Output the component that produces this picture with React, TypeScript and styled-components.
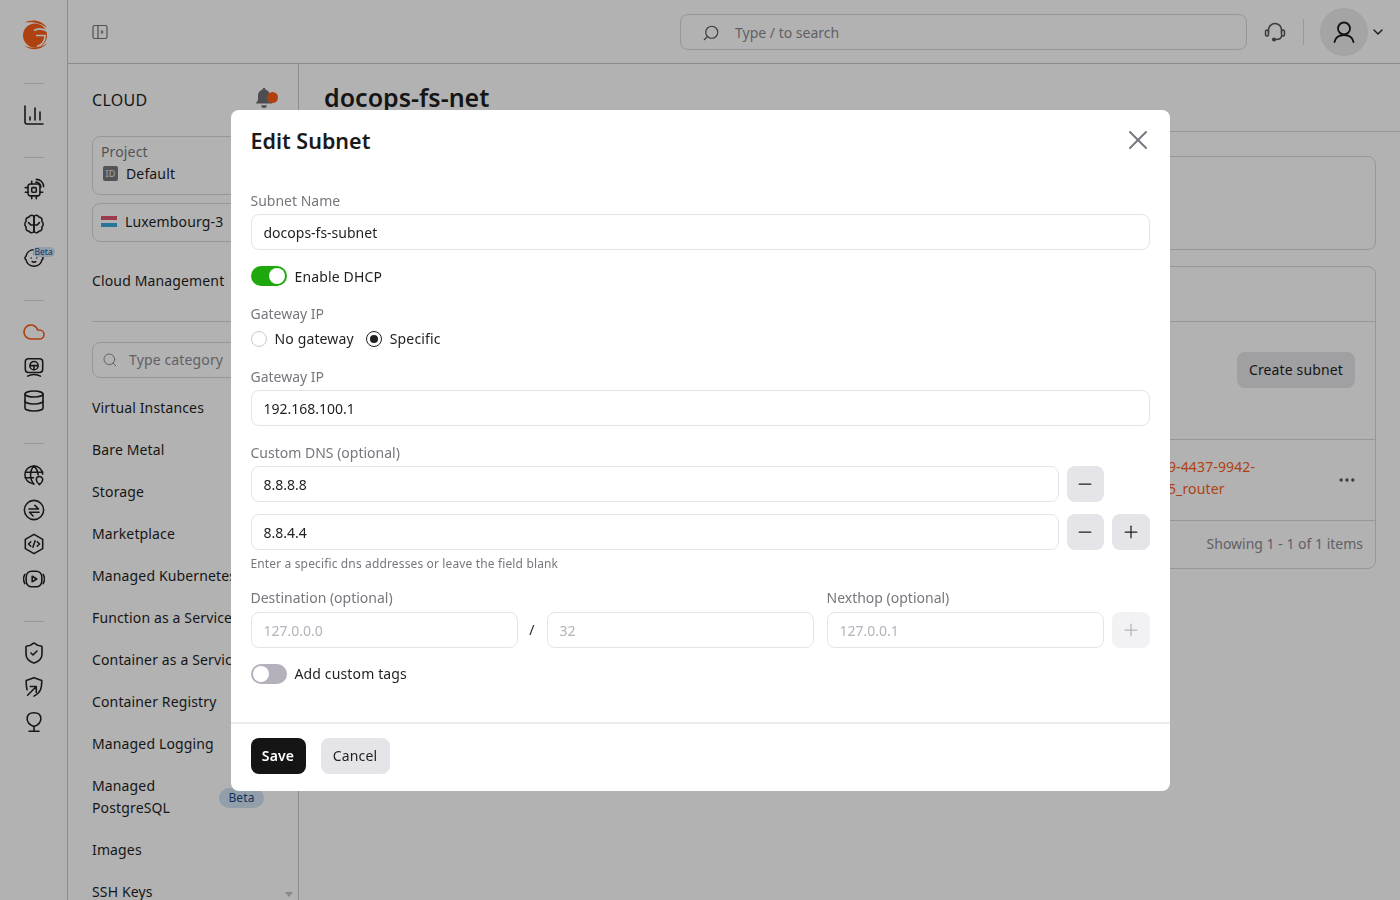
import styled, {createGlobalStyle} from 'styled-components'
import {ReactNode} from 'react'
import {Baby, ChartColumn, ChevronDown, Cloud, Database, Ellipsis, Minus, Plus, Search, ShieldCheck, X} from 'lucide-react'

const GlobalStyle = createGlobalStyle`
    html, body {
        margin: 0;
        height: 100%;
        overflow: hidden;
    }
    body {
        font-family: "Noto Sans", "Open Sans", sans-serif;
        font-size: 14px;
        line-height: 22px;
        letter-spacing: 0.14px;
        color: #1f1f1f;
        background: #fff;
    }
    * {
        box-sizing: border-box;
    }
    button {
        letter-spacing: inherit;
    }
`;

const Page = styled.div`
    display: flex;
    width: 1400px;
    height: 900px;
    overflow: hidden;
`;

const Rail = styled.nav`
    flex: 0 0 68px;
    display: flex;
    flex-direction: column;
    align-items: center;
    padding-top: 18px;
    border-right: 1px solid #c9c9c9;
`;

const RailGroup = styled.div`
    display: flex;
    flex-direction: column;
    align-items: center;
    gap: 12.5px;
`;

const LogoSlot = styled.span`
    display: flex;
    align-items: center;
    justify-content: center;
    width: 34px;
    height: 34px;
    margin-left: 3px;
`;

const RailIcon = styled.span<{ $active?: boolean }>`
    position: relative;
    display: flex;
    align-items: center;
    justify-content: center;
    width: 22px;
    height: 22px;
    color: ${props => props.$active ? '#fb5e18' : '#222'};

    svg {
        flex: none;
    }
`;

const RailDivider = styled.hr`
    width: 20px;
    height: 1px;
    margin: 31px 0 20px;
    border: 0;
    background: #d9d9d9;
`;

const RailBeta = styled.span`
    position: absolute;
    top: 0;
    left: 10px;
    padding: 0 2px;
    border-radius: 5px;
    font-size: 8.5px;
    line-height: 10px;
    letter-spacing: 0;
    color: #1c4a86;
    background: #d3e3f5;
`;

const Column = styled.div`
    flex: 1;
    display: flex;
    flex-direction: column;
    min-width: 0;
`;

const Topbar = styled.header`
    flex: 0 0 64px;
    display: flex;
    align-items: center;
    padding: 0 14px 0 24px;
    border-bottom: 1px solid #c9c9c9;
`;

const SearchBox = styled.div`
    display: flex;
    align-items: center;
    gap: 15px;
    width: 567px;
    height: 36px;
    margin-left: auto;
    padding: 2px 0 0 21px;
    border: 1px solid #d9d9dd;
    border-radius: 8px;
    color: #8b8b92;
    font-size: 14px;
    letter-spacing: 0;
`;

const HeadsetWrap = styled.span`
    display: flex;
    margin-left: 17px;
    color: #55555c;
`;

const TopDivider = styled.span`
    width: 1px;
    height: 26px;
    margin: 0 16px 0 17px;
    background: #dcdcdc;
`;

const Avatar = styled.span`
    display: flex;
    align-items: center;
    justify-content: center;
    width: 48px;
    height: 48px;
    border-radius: 50%;
    background: #ebebed;
`;

const AvatarCaret = styled(ChevronDown)`
    margin-left: 2px;
    color: #222;
`;

const Body = styled.div`
    flex: 1;
    display: flex;
    min-height: 0;
`;

const SidePanel = styled.aside`
    flex: 0 0 231px;
    position: relative;
    padding: 24px 24px 0;
    border-right: 1px solid #c9c9c9;
    overflow: hidden;
`;

const PanelHead = styled.div`
    display: flex;
    align-items: center;
    justify-content: space-between;
    height: 24px;
    margin-bottom: 24px;
    font-size: 16px;
    letter-spacing: 0.3px;
`;

const BellWrap = styled.span`
    position: relative;
    display: flex;
    margin: -5px 0 0 0;
    color: #6f6f74;
`;

const BellDot = styled.span`
    position: absolute;
    top: 5px;
    right: -4px;
    width: 11px;
    height: 11px;
    border-radius: 50%;
    background: #fb5e18;
`;

const SelectBox = styled.div<{ $height: number, $lift: number }>`
    display: flex;
    flex-direction: column;
    justify-content: center;
    width: 182px;
    height: ${props => props.$height}px;
    margin-bottom: 8px;
    padding: 0 8px ${props => props.$lift}px;
    border: 1px solid #d9d9dd;
    border-radius: 8px;
`;

const SelectLabel = styled.span`
    color: #77777e;
    font-size: 14px;
    line-height: 22px;
`;

const SelectRow = styled.span`
    display: flex;
    align-items: center;
    gap: 8px;
`;

const IdTag = styled.span`
    display: flex;
    align-items: center;
    justify-content: center;
    width: 15px;
    height: 15px;
    margin-left: 2px;
    border-radius: 2px;
    font-size: 9px;
    line-height: 15px;
    color: #eee;
    background: #77777e;
`;

const Flag = styled.span`
    width: 16px;
    height: 11px;
    background: linear-gradient(#e0556a 0 4px, transparent 4px 7px, #38a8dc 7px);
`;

const PanelCaption = styled.div`
    margin: 28px 0 29px;
    white-space: nowrap;
`;

const PanelRule = styled.hr`
    margin: 0 0 20px;
    border: 0;
    height: 1px;
    background: #d9d9dd;
`;

const CategorySearch = styled.div`
    display: flex;
    align-items: center;
    gap: 11px;
    width: 182px;
    height: 36px;
    margin-bottom: 19px;
    padding-left: 9px;
    border: 1px solid #d9d9dd;
    border-radius: 8px;
    color: #8b8b92;
    white-space: nowrap;
`;

const NavList = styled.ul`
    display: flex;
    flex-direction: column;
    gap: 20px;
    margin: 0;
    padding: 0;
    list-style: none;
`;

const NavItem = styled.li`
    position: relative;
    white-space: nowrap;
`;

const NavBeta = styled.span`
    position: absolute;
    top: 13px;
    left: 127px;
    width: 45px;
    height: 20px;
    border-radius: 10px;
    font-size: 12px;
    line-height: 20px;
    text-align: center;
    color: #1c4a86;
    background: #d3e3f5;
`;

const ScrollArrow = styled.span`
    position: absolute;
    right: 5px;
    bottom: 3px;
    width: 0;
    height: 0;
    border-left: 4px solid transparent;
    border-right: 4px solid transparent;
    border-top: 5px solid #c4c4c4;
`;

const Main = styled.main`
    flex: 1;
    min-width: 0;
`;

const TitleBar = styled.div`
    height: 68px;
    padding: 13px 25px 0;
    border-bottom: 1px solid #d9d9dd;
    font-size: 25px;
    font-weight: 600;
    line-height: 40px;
    letter-spacing: 0;
`;

const Content = styled.div`
    display: flex;
    flex-direction: column;
    gap: 16px;
    padding: 24px 24px 0;
`;

const Card = styled.section`
    border: 1px solid #d9d9dd;
    border-radius: 8px;
`;

const InfoCard = styled(Card)`
    height: 94px;
`;

const TableCard = styled(Card)`
    height: 303px;
`;

const CardTabs = styled.div`
    height: 55px;
    border-bottom: 1px solid #d9d9dd;
`;

const CardToolbar = styled.div`
    display: flex;
    justify-content: flex-end;
    height: 118px;
    padding: 30px 20px 0 0;
    border-bottom: 1px solid #d9d9dd;
`;

const CreateButton = styled.button`
    width: 118px;
    height: 36px;
    border: 0;
    border-radius: 8px;
    font: inherit;
    color: #1f1f1f;
    background: #e5e4e9;
`;

const TableRow = styled.div`
    display: flex;
    align-items: center;
    justify-content: space-between;
    height: 81px;
    padding-right: 18px;
    border-bottom: 1px solid #d9d9dd;
`;

const RouterLink = styled.span`
    margin: 0 0 4px 795px;
    color: #fb5e18;
    white-space: nowrap;
`;

const RowMenu = styled(Ellipsis)`
    color: #55555c;
`;

const TableFooter = styled.div`
    padding: 12px 12px 0 0;
    color: #8b8b92;
    letter-spacing: 0;
    text-align: right;
`;

const Overlay = styled.div`
    position: fixed;
    inset: 0;
    display: flex;
    align-items: center;
    justify-content: center;
    background: rgba(0, 0, 0, 0.3);
`;

const Modal = styled.div`
    display: flex;
    flex-direction: column;
    width: 939px;
    height: 681px;
    border-radius: 8px;
    background: #fff;
`;

const ModalHead = styled.div`
    display: flex;
    align-items: center;
    justify-content: space-between;
    height: 60px;
    margin-bottom: 21px;
    padding: 16px 20px 14px;
`;

const ModalTitle = styled.h2`
    margin: 0;
    font-size: 21.5px;
    font-weight: 600;
    line-height: 30px;
    letter-spacing: 0;
    color: #1a1a1a;
`;

const CloseIcon = styled(X)`
    flex: none;
    margin: -2px -4px 0 0;
    color: #77777e;
`;

const Form = styled.div`
    flex: 1;
    display: flex;
    flex-direction: column;
    gap: 16px;
    padding: 0 20px;
`;

const Field = styled.div`
    display: flex;
    flex-direction: column;
    gap: 3px;
`;

const DnsField = styled(Field)`
    margin-top: 1px;
`;

const RouteField = styled(Field)<{ $width?: string }>`
    flex: ${props => props.$width ? `0 0 ${props.$width}` : '1'};
    gap: 4px;
    min-width: 0;
`;

const NexthopField = styled(RouteField)`
    margin-left: 5px;
`;

const Label = styled.label`
    font-size: 14px;
    line-height: 20px;
    letter-spacing: 0;
    color: #77777e;
`;

const Input = styled.input`
    width: 100%;
    min-width: 0;
    height: 36px;
    padding: 2px 12px 0;
    border: 1px solid #e4e4e8;
    border-radius: 8px;
    outline: none;
    font: inherit;
    letter-spacing: 0;
    color: #1f1f1f;
    background: #fff;

    &::placeholder {
        color: #b3b3bb;
        opacity: 1;
    }
`;

const Toggle = styled.span<{ $on?: boolean }>`
    display: inline-flex;
    justify-content: ${props => props.$on ? 'flex-end' : 'flex-start'};
    width: 36px;
    height: 20px;
    padding: 2px;
    border-radius: 10px;
    background: ${props => props.$on ? '#1fa80e' : '#b6afbc'};

    &::after {
        content: '';
        width: 16px;
        height: 16px;
        border-radius: 50%;
        background: #fff;
    }
`;

const SwitchRow = styled.div`
    display: flex;
    align-items: center;
    gap: 8px;
    height: 20px;
`;

const DhcpText = styled.span`
    padding-top: 2px;
`;

const RadioField = styled.div`
    display: flex;
    flex-direction: column;
    gap: 5px;
    margin: 2px 0;
`;

const RadioRow = styled.div`
    display: flex;
    align-items: center;
    gap: 12px;
    height: 20px;
`;

const RadioOption = styled.span`
    display: flex;
    align-items: center;
    gap: 8px;
`;

const RadioMark = styled.span<{ $checked?: boolean }>`
    display: flex;
    align-items: center;
    justify-content: center;
    width: 16px;
    height: 16px;
    border: 1px solid ${props => props.$checked ? '#1f1f1f' : '#c9c9cf'};
    border-radius: 50%;

    &::after {
        content: '';
        display: ${props => props.$checked ? 'block' : 'none'};
        width: 8px;
        height: 8px;
        border-radius: 50%;
        background: #1f1f1f;
    }
`;

const DnsStack = styled.div`
    display: flex;
    flex-direction: column;
    gap: 12px;
`;

const InputRow = styled.div`
    display: flex;
    gap: 8px;
    height: 36px;
`;

const DnsInput = styled(Input)`
    flex: 0 0 808px;
    width: 808px;
`;

const IconButton = styled.button<{ $disabled?: boolean }>`
    display: flex;
    align-items: center;
    justify-content: center;
    flex: 0 0 38px;
    height: 36px;
    padding: 0;
    border: 0;
    border-radius: 8px;
    color: ${props => props.$disabled ? '#b3b3bb' : '#1f1f1f'};
    background: ${props => props.$disabled ? '#f2f2f4' : '#e5e4e9'};
`;

const DnsButton = styled(IconButton)`
    flex-basis: 37px;
`;

const Helper = styled.div`
    margin-top: -10px;
    font-size: 12px;
    line-height: 16px;
    color: #77777e;
`;

const RouteRow = styled.div`
    display: flex;
    align-items: flex-end;
    gap: 8px;
`;

const Slash = styled.span`
    flex: 0 0 13px;
    height: 36px;
    line-height: 36px;
    text-align: center;
`;

const ModalFooter = styled.div`
    display: flex;
    gap: 15px;
    height: 69px;
    padding: 14px 20px 17px;
    border-top: 2px solid #ececf0;
`;

const SaveButton = styled.button`
    width: 55px;
    height: 36px;
    border: 0;
    border-radius: 8px;
    font: inherit;
    font-weight: 600;
    color: #fff;
    background: #141414;
`;

const CancelButton = styled.button`
    width: 69px;
    height: 36px;
    border: 0;
    border-radius: 8px;
    font: inherit;
    color: #1f1f1f;
    background: #e5e4e9;
`;

function Line({children, size = 22}: { children: ReactNode, size?: number }) {
    return (
        <svg width={size} height={size} viewBox="0 0 24 24" fill="none" stroke="currentColor" strokeWidth={1.7}
             strokeLinecap="round" strokeLinejoin="round">
            {children}
        </svg>
    )
}

const GcoreLogo = () => (
    <svg width="28" height="32" viewBox="0 0 28 32">
        <circle cx="14" cy="16.500" r="12" fill="#fb5e18"/>
        <path d="M13 11.500C17 9 22 9.500 27 12.500" fill="none" stroke="#fff" strokeWidth="1.600"/>
        <path d="M15 16.500h9C24 22 21 26 16 27.500" fill="none" stroke="#fff" strokeWidth="1.600"/>
        <path fill="#fb5e18" d="M4 3.500C11 0 21 1 26 9 21 4.500 12 2.500 4 3.500Z"/>
        <path fill="#fb5e18" d="M3 26.500C9 31.500 20 32 26 24 20 29 10 30 3 26.500Z"/>
    </svg>
)

const ChipSignal = () => (
    <Line>
        <rect x="5.500" y="6.500" width="13" height="13" rx="2.500"/>
        <rect x="9.500" y="10.500" width="5" height="5" rx="1"/>
        <path d="M2.500 10.500h3M2.500 15.500h3M18.500 15.500h3M9.500 19.500v3M14.500 19.500v3M9.500 3.500v3"/>
        <path d="M14 4.500c3 0 5.500 2.500 5.500 5.500M14.500 1.500c4.500 0 8 3.500 8 8"/>
    </Line>
)

const BrainLobes = () => (
    <Line>
        <path d="M12 4c-1-2-4.500-2-5.500.5C4 4.500 2.500 7 3.500 9 1.500 10.500 1.500 14 3.500 15.500 2.500 18 4.500 20 6.500 19.800 7.500 22 11 22 12 20Z"/>
        <path d="M12 4c1-2 4.500-2 5.500.5C20 4.500 21.500 7 20.500 9c2 1.500 2 5 0 6.500 1 2.500-1 4.500-3 4.300C16.500 22 13 22 12 20Z"/>
        <path d="M12 13H8.500L6 10.500M12 13h3.500L18 10.500"/>
    </Line>
)

const MonitorWheel = () => (
    <Line>
        <rect x="2.500" y="3" width="19" height="15" rx="3.500"/>
        <circle cx="12" cy="10.500" r="4.500"/>
        <path d="M8 10.500h8M12 10.500v4.500M5 22c4-2.500 10-2.500 14 0"/>
    </Line>
)

const GlobePin = () => (
    <Line>
        <path d="M21.500 11A9.700 9.700 0 1 0 11 21.500"/>
        <path d="M2.500 9h19M2.500 15h9M12 2c-5 5.500-5 14.500 0 20M12 2c2.800 3 4.300 6.500 4.600 10"/>
        <path d="M18 22.500s-3.500-2.800-3.500-5.300a3.500 3.500 0 0 1 7 0c0 2.500-3.500 5.300-3.500 5.300Z"/>
    </Line>
)

const CircleSwap = () => (
    <Line>
        <circle cx="12" cy="12" r="10.500"/>
        <path d="M6.500 11H17l-4-4M17.500 14.500H7l4 4"/>
    </Line>
)

const HexCode = () => (
    <Line>
        <path d="M12 1.500l9.500 5.500v10L12 22.500 2.500 17V7Z"/>
        <path d="M8.500 9.500 6 12l2.500 2.500M15.500 9.500 18 12l-2.500 2.500M13.200 8.500l-2.400 7"/>
    </Line>
)

const PlayBox = () => (
    <Line>
        <rect x="3.500" y="3.500" width="17" height="17" rx="6"/>
        <path d="M2 7C.3 10 .3 14 2 17M22 7c1.700 3 1.700 7 0 10"/>
        <path d="M10 9l5 3-5 3Z"/>
    </Line>
)

const ShieldArrow = () => (
    <Line>
        <path d="M4.500 15C3.500 12.500 3.500 9 3.500 5L12 2l8.500 3c0 8-1 13-8.500 17"/>
        <path d="M5 21l9-9M8 11.500h6.500V18"/>
    </Line>
)

const PinBulb = () => (
    <Line>
        <path d="M12 2c4.500 0 7.500 2.500 7.500 6.500 0 4-3.500 7-7.500 8.500-4-1.500-7.500-4.500-7.500-8.500C4.500 4.500 7.500 2 12 2Z"/>
        <path d="M12 17v5M6.500 22h11"/>
    </Line>
)

const Bell = () => (
    <svg width="20" height="22" viewBox="0 0 18 20" fill="currentColor">
        <path d="M9 1c.8 0 1.400.6 1.500 1.400C13 3 14.500 5.200 14.500 8v4l2 3H1.500l2-3V8c0-2.800 1.500-5 4-5.600C7.600 1.600 8.200 1 9 1ZM6.500 16.500h5a2.500 2.500 0 0 1-5 0Z"/>
    </svg>
)

const PanelToggle = () => (
    <svg width="16" height="16" viewBox="0 0 16 16" fill="none" stroke="#77777e" strokeWidth="1.200">
        <rect x="1" y="1.500" width="14" height="13" rx="1.500"/>
        <path d="M6 1.500v13M9 6.500l1.800 1.500L9 9.500"/>
    </svg>
)

const Headset = () => (
    <svg width="22" height="22" viewBox="0 0 22 22" fill="none" stroke="currentColor" strokeWidth="1.500"
         strokeLinecap="round">
        <path d="M4.500 11V9a6.500 6.500 0 0 1 13 0v2M17.500 15c0 2.500-2 3.500-6 3.500"/>
        <rect x="1.500" y="9" width="3" height="6" rx="1.500"/>
        <rect x="17.500" y="9" width="3" height="6" rx="1.500"/>
        <circle cx="10" cy="18.500" r="1.300" fill="currentColor"/>
    </svg>
)

const User = () => (
    <svg width="24" height="24" viewBox="0 0 24 24" fill="none" stroke="#1a1a1a" strokeWidth="1.800"
         strokeLinecap="round">
        <circle cx="12" cy="8.500" r="6"/>
        <path d="M2.500 22c1-4.500 4-7 9.500-7s8.500 2.500 9.500 7"/>
    </svg>
)

const SearchFlipped = styled(Search)`
    transform: scaleX(-1);
    color: #55555c;
`;

const navItems = [
    'Virtual Instances', 'Bare Metal', 'Storage', 'Marketplace', 'Managed Kubernetes', 'Function as a Service',
    'Container as a Service', 'Container Registry', 'Managed Logging',
]

export default function App() {
    return (
        <>
            <GlobalStyle/>
            <Page>
                <Rail>
                    <LogoSlot><GcoreLogo/></LogoSlot>
                    <RailDivider/>
                    <RailIcon><ChartColumn size={24} strokeWidth={1.6}/></RailIcon>
                    <RailDivider/>
                    <RailGroup>
                        <RailIcon><ChipSignal/></RailIcon>
                        <RailIcon><BrainLobes/></RailIcon>
                        <RailIcon><Baby size={22} strokeWidth={1.7}/><RailBeta>Beta</RailBeta></RailIcon>
                    </RailGroup>
                    <RailDivider/>
                    <RailGroup>
                        <RailIcon $active><Cloud size={24} strokeWidth={1.6}/></RailIcon>
                        <RailIcon><MonitorWheel/></RailIcon>
                        <RailIcon><Database size={24} strokeWidth={1.6}/></RailIcon>
                    </RailGroup>
                    <RailDivider/>
                    <RailGroup>
                        <RailIcon><GlobePin/></RailIcon>
                        <RailIcon><CircleSwap/></RailIcon>
                        <RailIcon><HexCode/></RailIcon>
                        <RailIcon><PlayBox/></RailIcon>
                    </RailGroup>
                    <RailDivider/>
                    <RailGroup>
                        <RailIcon><ShieldCheck size={24} strokeWidth={1.6}/></RailIcon>
                        <RailIcon><ShieldArrow/></RailIcon>
                        <RailIcon><PinBulb/></RailIcon>
                    </RailGroup>
                </Rail>
                <Column>
                    <Topbar>
                        <PanelToggle/>
                        <SearchBox>
                            <SearchFlipped size={18} strokeWidth={1.5}/>
                            Type / to search
                        </SearchBox>
                        <HeadsetWrap><Headset/></HeadsetWrap>
                        <TopDivider/>
                        <Avatar><User/></Avatar>
                        <AvatarCaret size={16}/>
                    </Topbar>
                    <Body>
                        <SidePanel>
                            <PanelHead>
                                CLOUD
                                <BellWrap><Bell/><BellDot/></BellWrap>
                            </PanelHead>
                            <SelectBox $height={59} $lift={6}>
                                <SelectLabel>Project</SelectLabel>
                                <SelectRow><IdTag>ID</IdTag>Default</SelectRow>
                            </SelectBox>
                            <SelectBox $height={39} $lift={2}>
                                <SelectRow><Flag/>Luxembourg-3</SelectRow>
                            </SelectBox>
                            <PanelCaption>Cloud Management</PanelCaption>
                            <PanelRule/>
                            <CategorySearch>
                                <Search size={16} strokeWidth={1.5}/>
                                Type category
                            </CategorySearch>
                            <NavList>
                                {navItems.map(item => <NavItem key={item}>{item}</NavItem>)}
                                <NavItem>Managed<br/>PostgreSQL<NavBeta>Beta</NavBeta></NavItem>
                                <NavItem>Images</NavItem>
                                <NavItem>SSH Keys</NavItem>
                            </NavList>
                            <ScrollArrow/>
                        </SidePanel>
                        <Main>
                            <TitleBar>docops-fs-net</TitleBar>
                            <Content>
                                <InfoCard/>
                                <TableCard>
                                    <CardTabs/>
                                    <CardToolbar>
                                        <CreateButton>Create subnet</CreateButton>
                                    </CardToolbar>
                                    <TableRow>
                                        <RouterLink>
                                            7104019-4437-9942-<br/>
                                            7029105_router
                                        </RouterLink>
                                        <RowMenu size={20}/>
                                    </TableRow>
                                    <TableFooter>Showing 1 - 1 of 1 items</TableFooter>
                                </TableCard>
                            </Content>
                        </Main>
                    </Body>
                </Column>
            </Page>
            <Overlay>
                <Modal>
                    <ModalHead>
                        <ModalTitle>Edit Subnet</ModalTitle>
                        <CloseIcon size={32} strokeWidth={1.5}/>
                    </ModalHead>
                    <Form>
                        <Field>
                            <Label>Subnet Name</Label>
                            <Input readOnly value="docops-fs-subnet"/>
                        </Field>
                        <SwitchRow><Toggle $on/><DhcpText>Enable DHCP</DhcpText></SwitchRow>
                        <RadioField>
                            <Label>Gateway IP</Label>
                            <RadioRow>
                                <RadioOption><RadioMark/>No gateway</RadioOption>
                                <RadioOption><RadioMark $checked/>Specific</RadioOption>
                            </RadioRow>
                        </RadioField>
                        <Field>
                            <Label>Gateway IP</Label>
                            <Input readOnly value="192.168.100.1"/>
                        </Field>
                        <DnsField>
                            <Label>Custom DNS (optional)</Label>
                            <DnsStack>
                                <InputRow>
                                    <DnsInput readOnly value="8.8.8.8"/>
                                    <DnsButton><Minus size={20} strokeWidth={1.5}/></DnsButton>
                                </InputRow>
                                <InputRow>
                                    <DnsInput readOnly value="8.8.4.4"/>
                                    <DnsButton><Minus size={20} strokeWidth={1.5}/></DnsButton>
                                    <IconButton><Plus size={20} strokeWidth={1.5}/></IconButton>
                                </InputRow>
                            </DnsStack>
                        </DnsField>
                        <Helper>Enter a specific dns addresses or leave the field blank</Helper>
                        <RouteRow>
                            <RouteField $width="267px">
                                <Label>Destination (optional)</Label>
                                <Input readOnly placeholder="127.0.0.0"/>
                            </RouteField>
                            <Slash>/</Slash>
                            <RouteField $width="267px">
                                <Label>&nbsp;</Label>
                                <Input readOnly placeholder="32"/>
                            </RouteField>
                            <NexthopField>
                                <Label>Nexthop (optional)</Label>
                                <Input readOnly placeholder="127.0.0.1"/>
                            </NexthopField>
                            <IconButton $disabled><Plus size={20} strokeWidth={1.5}/></IconButton>
                        </RouteRow>
                        <SwitchRow><Toggle/>Add custom tags</SwitchRow>
                    </Form>
                    <ModalFooter>
                        <SaveButton>Save</SaveButton>
                        <CancelButton>Cancel</CancelButton>
                    </ModalFooter>
                </Modal>
            </Overlay>
        </>
    )
}
